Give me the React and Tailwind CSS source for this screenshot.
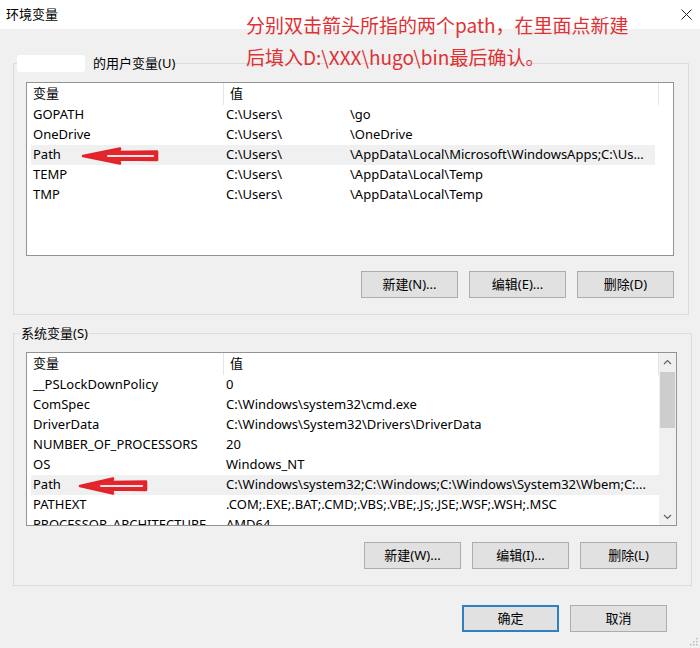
import React from "react";

const FONT = { fontFamily: '"Segoe UI", "Noto Sans", "Noto Sans CJK SC", sans-serif' };

const userVars = [
  ["GOPATH", "C:\\Users\\", "\\go"],
  ["OneDrive", "C:\\Users\\", "\\OneDrive"],
  ["Path", "C:\\Users\\", "\\AppData\\Local\\Microsoft\\WindowsApps;C:\\Us...", true],
  ["TEMP", "C:\\Users\\", "\\AppData\\Local\\Temp"],
  ["TMP", "C:\\Users\\", "\\AppData\\Local\\Temp"],
];

const sysVars = [
  ["__PSLockDownPolicy", "0"],
  ["ComSpec", "C:\\Windows\\system32\\cmd.exe"],
  ["DriverData", "C:\\Windows\\System32\\Drivers\\DriverData"],
  ["NUMBER_OF_PROCESSORS", "20"],
  ["OS", "Windows_NT"],
  ["Path", "C:\\Windows\\system32;C:\\Windows;C:\\Windows\\System32\\Wbem;C:...", true],
  ["PATHEXT", ".COM;.EXE;.BAT;.CMD;.VBS;.VBE;.JS;.JSE;.WSF;.WSH;.MSC"],
  ["PROCESSOR_ARCHITECTURE", "AMD64"],
];

// hand-drawn style arrow pointing left
function RedArrow({ w }) {
  const h = Math.round(w * 0.5);
  return (
    <svg width={w} height="20" viewBox={`0 0 ${w} 20`}>
      <path
        d={`M2 10 L${h} 2.5 L${h - 1} 6 L${w - 2} 5.5 L${w - 2} 14 L${h - 1} 13.5 L${h} 17.5 Z`}
        fill="#e3282d"
        stroke="#e0242a"
        strokeWidth="2.6"
        strokeLinejoin="round"
      />
      <path d={`M${h - 12} 10 L${w - 6} 10`} stroke="#fbe3e3" strokeWidth="2" strokeLinecap="round" />
    </svg>
  );
}

function Btn({ children, primary }) {
  return (
    <button
      className={`w-[97px] h-[27px] text-[13px] text-black flex items-center justify-center ${
        primary ? "bg-[#e1e1e1] border-2 border-[#2f7fc1]" : "bg-[#e1e1e1] border border-[#adadad]"
      }`}
    >
      {children}
    </button>
  );
}

function Header() {
  return (
    <div className="flex h-[22px] items-center text-[13px]">
      <div className="w-[193px] h-full pl-[2px] flex items-center border-r border-[#e5e5e5]">变量</div>
      <div className="w-[435px] h-full pl-[6px] flex items-center border-r border-[#e5e5e5]">值</div>
    </div>
  );
}

export default function App() {
  return (
    <div className="w-[700px] h-[648px] bg-[#f0f0f0] relative overflow-hidden text-black" style={FONT}>
      {/* title bar */}
      <div className="h-[29px] bg-white flex items-center justify-between pl-[6px] pr-[8px]">
        <span className="text-[13px]">环境变量</span>
        <svg width="11" height="11" viewBox="0 0 11 11">
          <path d="M0.5 0.5 L10.5 10.5 M10.5 0.5 L0.5 10.5" stroke="#222" strokeWidth="1" />
        </svg>
      </div>

      {/* annotation */}
      <div
        className="absolute left-[246px] top-[9px] text-[19px] leading-[32px] text-[#df3134]"
        style={{ fontFamily: '"Noto Sans CJK SC", "Noto Sans", sans-serif' }}
      >
        <div>分别双击箭头所指的两个path，在里面点新建</div>
        <div>后填入D:\XXX\hugo\bin最后确认。</div>
      </div>

      <div className="pl-[13px] pr-[11px] pt-[24px]">
        {/* user vars */}
        <fieldset className="border border-[#dcdcdc] pl-[12px] pr-[14px] pb-[16px]">
          <legend className="-ml-[9px] text-[13px] leading-[20px] flex items-center">
            <span className="w-[68px] h-[17px] bg-white inline-block rounded-[3px]" />
            <span className="ml-[8px]">的用户变量(U)</span>
          </legend>
          <div className="mt-[9px] h-[174px] bg-white border border-[#939393] pl-[4px] relative">
            <Header />
            {userVars.map(([n, a, b, sel]) => (
              <div
                key={n}
                className={`flex h-[20px] items-center text-[13px] w-[624px] ${sel ? "bg-[#f0f0f0]" : ""}`}
              >
                <div className="w-[193px] pl-[2px]">{n}</div>
                <div className="pl-[2px] flex whitespace-nowrap">
                  <span className="w-[124px]">{a}</span>
                  <span>{b}</span>
                </div>
              </div>
            ))}
            <div className="absolute left-[54px] top-[63px]">
              <RedArrow w={78} />
            </div>
          </div>
          <div className="flex justify-end gap-[11px] mt-[15px]">
            <Btn>新建(N)...</Btn>
            <Btn>编辑(E)...</Btn>
            <Btn>删除(D)</Btn>
          </div>
        </fieldset>

        {/* system vars */}
        <fieldset className="mt-[8px] border border-[#dcdcdc] pl-[12px] pr-[14px] pb-[16px]">
          <legend className="-ml-[6px] px-[1px] text-[13px] leading-[20px]">系统变量(S)</legend>
          <div className="mt-[9px] h-[174px] bg-white border border-[#939393] pl-[4px] flex overflow-hidden">
            <div className="flex-1 relative">
              <Header />
              {sysVars.map(([n, v, sel]) => (
                <div
                  key={n}
                  className={`flex h-[20px] items-center text-[13px] whitespace-nowrap ${sel ? "bg-[#f0f0f0]" : ""}`}
                >
                  <div className="w-[193px] pl-[2px]">{n}</div>
                  <div className="pl-[2px]">{v}</div>
                </div>
              ))}
              <div className="absolute left-[47px] top-[123px]">
                <RedArrow w={70} />
              </div>
            </div>
            <div className="w-[17px] bg-[#f0f0f0] flex flex-col items-center">
              <div className="h-[18px] flex items-center justify-center">
                <svg width="9" height="6" viewBox="0 0 9 6">
                  <path d="M1 5 L4.5 1.5 L8 5" stroke="#606060" strokeWidth="1.2" fill="none" />
                </svg>
              </div>
              <div className="w-[15px] h-[56px] bg-[#cdcdcd] mt-[1px]" />
              <div className="flex-1" />
              <div className="h-[17px] flex items-center justify-center">
                <svg width="9" height="6" viewBox="0 0 9 6">
                  <path d="M1 1 L4.5 4.5 L8 1" stroke="#606060" strokeWidth="1.2" fill="none" />
                </svg>
              </div>
            </div>
          </div>
          <div className="flex justify-end gap-[11px] mt-[16px]">
            <Btn>新建(W)...</Btn>
            <Btn>编辑(I)...</Btn>
            <Btn>删除(L)</Btn>
          </div>
        </fieldset>

        <div className="flex justify-end gap-[11px] mt-[19px] pr-[22px]">
          <Btn primary>确定</Btn>
          <Btn>取消</Btn>
        </div>
      </div>

      {/* resize grip */}
      <svg className="absolute right-[2px] bottom-[2px]" width="8" height="8" viewBox="0 0 8 8">
        <rect x="6" y="0" width="1.5" height="1.5" fill="#bbb" />
        <rect x="3" y="3" width="1.5" height="1.5" fill="#bbb" />
        <rect x="6" y="3" width="1.5" height="1.5" fill="#bbb" />
        <rect x="0" y="6" width="1.5" height="1.5" fill="#bbb" />
        <rect x="3" y="6" width="1.5" height="1.5" fill="#bbb" />
        <rect x="6" y="6" width="1.5" height="1.5" fill="#bbb" />
      </svg>
    </div>
  );
}
